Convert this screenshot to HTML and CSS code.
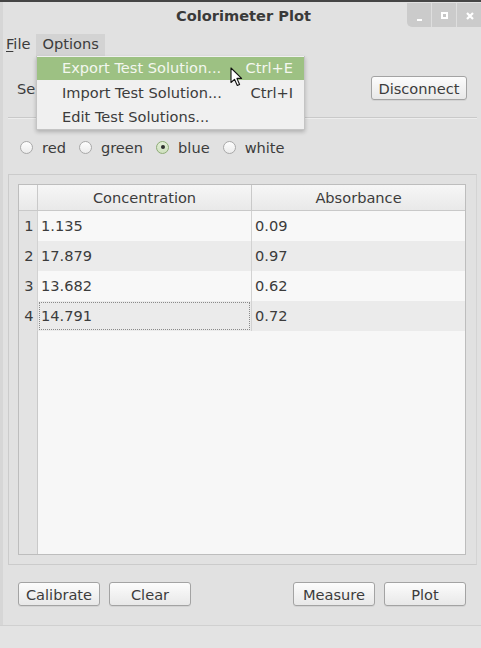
FILE: index.html
```html
<!DOCTYPE html>
<html>
<head>
<meta charset="utf-8">
<link rel="stylesheet" href="styles.css">
</head>
<body>
<div class="window">
  <div class="titlebar">
    <div></div>
    <div class="title">Colorimeter Plot</div>
    <div class="wctrls">
      <div class="wbtn"><svg width="24" height="24" viewBox="0 0 24 24"><rect x="10" y="16" width="5" height="2" fill="#fff"/></svg></div>
      <div class="wbtn sep"><svg width="24" height="24" viewBox="0 0 24 24"><rect x="9" y="9" width="7" height="7" fill="#fff"/><rect x="11" y="11" width="3" height="3" fill="#c6c6c6"/></svg></div>
      <div class="wbtn sep"><svg width="24" height="24" viewBox="0 0 24 24"><path d="M10 10 L16 16 M16 10 L10 16" stroke="#fff" stroke-width="2.2"/></svg></div>
    </div>
  </div>

  <div class="menubar">
    <div class="mitem"><span class="ul">F</span>ile</div>
    <div class="mitem open">Options</div>
  </div>

  <div class="content">
    <div class="toprow">
      <span class="lbl">Se</span>
      <button class="btn wide">Disconnect</button>
    </div>
    <div class="separator"></div>
    <div class="radios">
      <label class="radio"><span class="dot"></span>red</label>
      <label class="radio"><span class="dot"></span>green</label>
      <label class="radio"><span class="dot on"></span>blue</label>
      <label class="radio"><span class="dot"></span>white</label>
    </div>
    <div class="frame">
      <div class="table">
        <div class="thead">
          <div class="th corner"></div>
          <div class="th">Concentration</div>
          <div class="th">Absorbance</div>
        </div>
        <div class="tr odd"><div class="num">1</div><div class="td">1.135</div><div class="td">0.09</div></div>
        <div class="tr even"><div class="num">2</div><div class="td">17.879</div><div class="td">0.97</div></div>
        <div class="tr odd"><div class="num">3</div><div class="td">13.682</div><div class="td">0.62</div></div>
        <div class="tr even"><div class="num">4</div><div class="td focus"><span class="focusbox">14.791</span></div><div class="td">0.72</div></div>
      </div>
    </div>
    <div class="buttons">
      <button class="btn">Calibrate</button>
      <button class="btn">Clear</button>
      <div class="spacer"></div>
      <button class="btn">Measure</button>
      <button class="btn">Plot</button>
    </div>
  </div>
  <div class="statusbar"></div>

  <div class="dropdown">
    <div class="ditem hl"><span>Export Test Solution...</span><span>Ctrl+E</span></div>
    <div class="ditem"><span>Import Test Solution...</span><span>Ctrl+I</span></div>
    <div class="ditem"><span>Edit Test Solutions...</span><span></span></div>
  </div>
  <svg class="cursor" width="14" height="20" viewBox="0 0 14 20"><path d="M1 1 L1 15.5 L4.5 12.3 L7.3 18.5 L9.6 17.5 L6.9 11.4 L11.6 11.4 Z" fill="#fff" stroke="#111" stroke-width="1.1" stroke-linejoin="round"/></svg>
</div>
</body>
</html>
```
FILE: styles.css
```css
html, body { margin: 0; padding: 0; }
body {
  font-family: "DejaVu Sans", sans-serif;
  font-size: 14.6px;
  color: #3c3c3c;
  background: #e1e1e1;
}
.window {
  position: relative;
  width: 481px;
  height: 648px;
  background: #e1e1e1;
  box-shadow: inset 3px 0 0 #d6d6d6;
  display: flex;
  flex-direction: column;
  overflow: hidden;
}
.titlebar {
  box-sizing: border-box;
  height: 30px;
  border-top: 2px solid #454545;
  display: grid;
  grid-template-columns: 1fr auto 1fr;
  align-items: start;
}
.title {
  font-weight: bold;
  color: #3a3a3a;
  line-height: 28px;
  padding-left: 6px;
}
.wctrls {
  justify-self: end;
  margin-top: 1px;
  display: flex;
  background: #cbcbcb;
  border-bottom-left-radius: 5px;
  height: 24px;
  width: 74px;
}
.wbtn { width: 24px; height: 24px; }
.wbtn svg { display: block; }
.wbtn.sep { border-left: 1px solid #dedede; }
.menubar {
  margin-top: 3px;
  height: 24px;
  display: flex;
}
.mitem {
  margin-top: 1px;
  height: 22px;
  line-height: 20px;
  padding: 0 6px;
}
.mitem.open { background: #d3d3d3; }
.ul { text-decoration: underline; text-underline-offset: 2px; }
.content {
  padding: 0 4px 0 8px;
}
.toprow {
  margin-top: 19px;
  height: 24px;
  display: flex;
  justify-content: space-between;
  align-items: center;
  padding: 0 10px 0 9px;
}
.separator {
  margin-top: 17px;
  border-top: 1px solid #c9c9c9;
  border-bottom: 1px solid #ededed;
}
.radios {
  margin-top: 20px;
  height: 16px;
  display: flex;
  align-items: center;
  padding-left: 12px;
}
.radio {
  display: flex;
  align-items: center;
  margin-right: 13px;
}
.dot {
  box-sizing: border-box;
  width: 13px;
  height: 13px;
  border-radius: 50%;
  border: 1px solid #a9a9a9;
  background: linear-gradient(#fdfdfd, #ececec);
  margin-right: 9px;
  display: flex;
  align-items: center;
  justify-content: center;
}
.dot.on {
  border-color: #8eac76;
  background: linear-gradient(#e3eed8, #cfe0bf);
}
.dot.on::after {
  content: "";
  width: 4px;
  height: 4px;
  border-radius: 50%;
  background: #2e2e2e;
}
.frame {
  margin-top: 19px;
  box-sizing: border-box;
  height: 391px;
  border: 1px solid #cbcbcb;
  border-right-color: #d4d4d4;
  padding: 9px 10px 9px 9px;
}
.table {
  box-sizing: border-box;
  height: 371px;
  border: 1px solid #bdbdbd;
  background: linear-gradient(to right, #e3e3e3 18px, #c9c9c9 18px, #c9c9c9 19px, #f7f7f7 19px);
}
.thead, .tr {
  display: grid;
  grid-template-columns: 18px 214px 214px;
}
.thead {
  height: 26px;
  box-sizing: border-box;
  border-bottom: 1px solid #c9c9c9;
}
.th {
  background: linear-gradient(#f6f6f6, #e9e9e9);
  border-left: 1px solid #c9c9c9;
  text-align: center;
  line-height: 25px;
}
.th.corner { border-left: none; }
.tr {
  height: 30px;
  box-sizing: border-box;
  border-bottom: 1px solid #d2d2d2;
}
.tr.odd .td { background: #f8f8f8; }
.tr.even .td { background: #ebebeb; }
.num {
  background: #e3e3e3;
  text-align: center;
  line-height: 30px;
  padding-left: 2px;
}
.td {
  border-left: 1px solid #d2d2d2;
  line-height: 29px;
  padding-left: 3px;
}
.td.focus {
  padding: 1px;
}
.focusbox {
  display: block;
  box-sizing: border-box;
  height: 28px;
  border: 1px dotted #8a8a8a;
  line-height: 26px;
  padding-left: 1px;
}
.buttons {
  margin-top: 17px;
  display: flex;
  gap: 9px;
  padding: 0 11px 0 10px;
}
.spacer { flex: 1; }
.btn {
  box-sizing: border-box;
  width: 82px;
  height: 24px;
  font-family: "DejaVu Sans", sans-serif;
  font-size: 14.6px;
  color: #3c3c3c;
  border: 1px solid #a3a3a3;
  border-radius: 3px;
  background: linear-gradient(#fcfcfc, #e8e8e8);
  box-shadow: 0 1px 0 rgba(0,0,0,0.06);
  padding: 0;
  line-height: 21px;
}
.btn.wide { width: 96px; }
.statusbar {
  margin-top: 19px;
  border-top: 1px solid #d0d0d0;
  flex: 1;
  background: #e3e3e3;
}
.dropdown {
  position: absolute;
  left: 36px;
  top: 56px;
  width: 269px;
  box-sizing: border-box;
  border: 1px solid #c4c4c4;
  border-top: none;
  background: #f0f0f0;
  box-shadow: 0 2px 4px rgba(0,0,0,0.22);
  padding-top: 1px;
}
.ditem {
  height: 24px;
  line-height: 23px;
  display: flex;
  justify-content: space-between;
  padding: 0 11px 0 25px;
  color: #3c3c3c;
}
.ditem.hl {
  background: #9dc183;
  color: #f3f7ef;
  height: 23px;
  margin-bottom: 1px;
  line-height: 22px;
}
.cursor {
  position: absolute;
  left: 230px;
  top: 67px;
}
```
